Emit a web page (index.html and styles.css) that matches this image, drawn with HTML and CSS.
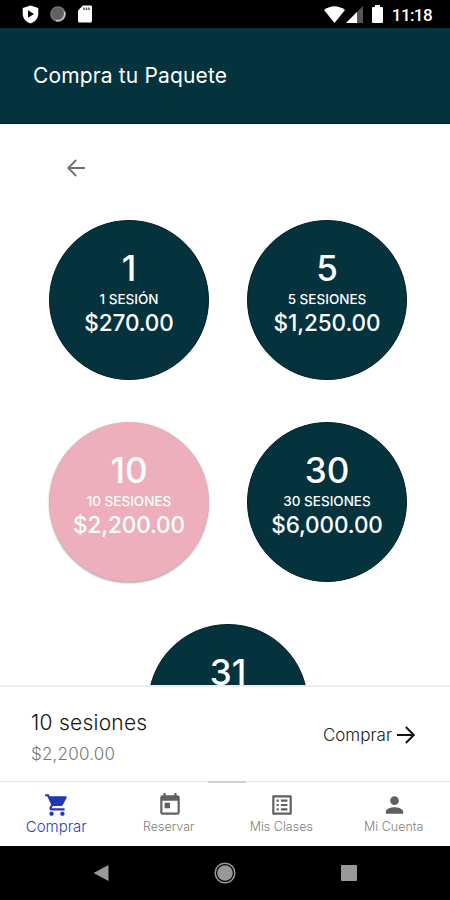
FILE: index.html
```html
<!DOCTYPE html>
<html lang="es">
<head>
    <meta charset="UTF-8">
    <meta name="viewport" content="width=device-width, initial-scale=1.0">
    <title>Compra tu Paquete</title>
    <link rel="stylesheet" href="styles.css">
</head>
<body>
    <div class="status-bar">
        <div class="status-left">
            <svg class="icon-shield" width="17" height="19" viewBox="0 0 17 19"><path d="M8.5 0.5L16.3 3V8.5C16.3 13.5 13 17 8.5 18.5C4 17 0.7 13.5 0.7 8.5V3Z" fill="#fff"/><path d="M6 5.3L12 9L6 12.7Z" fill="#000"/></svg>
            <svg class="icon-sync" width="16" height="16" viewBox="0 0 16 16"><circle cx="8" cy="8" r="7.8" fill="#777"/><circle cx="7.5" cy="7.5" r="6" fill="#606060"/><path d="M14.5 6A7 7 0 0 1 6 14.6" fill="none" stroke="#ccc" stroke-width="1.5"/></svg>
            <svg class="icon-sd" width="14" height="18" viewBox="0 0 14 18"><path d="M5 0.5H12.5Q14 0.5 14 2V16Q14 17.5 12.5 17.5H1.5Q0 17.5 0 16V5.5Z" fill="#fff"/><path d="M6 2.5V5M8.5 2.5V5M11 2.5V5" stroke="#444" stroke-width="1.4"/></svg>
        </div>
        <div class="status-right">
            <svg class="icon-wifi" width="21" height="17" viewBox="0 0 21 17"><path d="M0 4Q10.5 -3.5 21 4L10.5 17Z" fill="#fff"/></svg>
            <svg class="icon-signal" width="17" height="17" viewBox="0 0 17 17"><path d="M0 17L17 0V17Z" fill="#555"/><path d="M0 17L11 6V17Z" fill="#fff"/></svg>
            <svg class="icon-battery" width="11" height="18" viewBox="0 0 11 18"><path d="M3 0H8V2H10Q11 2 11 3V17Q11 18 10 18H1Q0 18 0 17V3Q0 2 1 2H3Z" fill="#fff"/></svg>
            <span class="clock">11:18</span>
        </div>
    </div>
    <header>
        <h1>Compra tu Paquete</h1>
    </header>
    <main>
        <svg class="back" width="18" height="18" viewBox="0 0 18 18"><path d="M18 9H1.5M9.2 1L1.2 9L9.2 17" fill="none" stroke="#707070" stroke-width="1.8"/></svg>
        <div class="paquetes">
            <div class="paquete">
                <span class="numero">1</span>
                <span class="sesiones">1 SESIÓN</span>
                <span class="precio">$270.00</span>
            </div>
            <div class="paquete">
                <span class="numero">5</span>
                <span class="sesiones">5 SESIONES</span>
                <span class="precio">$1,250.00</span>
            </div>
            <div class="paquete seleccionado">
                <span class="numero">10</span>
                <span class="sesiones">10 SESIONES</span>
                <span class="precio">$2,200.00</span>
            </div>
            <div class="paquete">
                <span class="numero">30</span>
                <span class="sesiones">30 SESIONES</span>
                <span class="precio">$6,000.00</span>
            </div>
            <div class="paquete ultimo">
                <span class="numero">31</span>
            </div>
        </div>
    </main>
    <section class="resumen">
        <div class="detalle">
            <p class="resumen-titulo">10 sesiones</p>
            <p class="resumen-precio">$2,200.00</p>
        </div>
        <div class="comprar">
            <span>Comprar</span>
            <svg width="18" height="18" viewBox="0 0 18 18"><path d="M0 9H16.5M8.8 1L16.8 9L8.8 17" fill="none" stroke="#111" stroke-width="1.9"/></svg>
        </div>
    </section>
    <nav class="tabs">
        <div class="tirador"></div>
        <div class="tab activo">
            <svg width="26" height="26" viewBox="0 0 24 24"><path d="M7 18c-1.1 0-1.99.9-1.99 2S5.9 22 7 22s2-.9 2-2-.9-2-2-2zM1 2v2h2l3.6 7.590-1.350 2.450c-.16.28-.25.61-.25.96 0 1.100.9 2 2 2h12v-2H7.420c-.14 0-.25-.11-.25-.25l.03-.12.9-1.630h7.450c.75 0 1.410-.41 1.750-1.030l3.580-6.490A1 1 0 0 0 20 4H5.210l-.94-2H1zm16 16c-1.100 0-1.990.9-1.990 2s.89 2 1.990 2 2-.9 2-2-.9-2-2-2z"/></svg>
            <span>Comprar</span>
        </div>
        <div class="tab">
            <svg width="26" height="26" viewBox="0 0 24 24"><path d="M19 3h-1V1h-2v2H8V1H6v2H5a2 2 0 0 0-2 2v14c0 1.100.9 2 2 2h14c1.100 0 2-.9 2-2V5c0-1.100-.9-2-2-2zm0 16H5V8h14v11zM7 10h5v5H7z"/></svg>
            <span>Reservar</span>
        </div>
        <div class="tab">
            <svg width="26" height="26" viewBox="0 0 24 24"><path d="M19 5v14H5V5h14m1.100-2H3.900c-.5 0-.9.4-.9.9v16.200c0 .4.4.9.9.9h16.200c.4 0 .9-.5.9-.9V3.900c0-.5-.5-.9-.9-.9zM11 7h6v2h-6V7zm0 4h6v2h-6v-2zm0 4h6v2h-6zM7 7h2v2H7zm0 4h2v2H7zm0 4h2v2H7z"/></svg>
            <span>Mis Clases</span>
        </div>
        <div class="tab">
            <svg width="27" height="26" viewBox="0 0 24 24"><path d="M12 12c2.210 0 4-1.790 4-4s-1.790-4-4-4-4 1.790-4 4 1.790 4 4 4zm0 2c-2.670 0-8 1.340-8 4v2h16v-2c0-2.660-5.330-4-8-4z"/></svg>
            <span>Mi Cuenta</span>
        </div>
    </nav>
    <div class="android-nav">
        <svg width="16" height="18" viewBox="0 0 16 18"><path d="M0.5 9L15.5 1V17Z" fill="#999"/></svg>
        <svg width="22" height="22" viewBox="0 0 22 22"><circle cx="11" cy="11" r="9.8" fill="none" stroke="#999" stroke-width="1.5"/><circle cx="11" cy="11" r="7.8" fill="#999"/></svg>
        <svg width="16" height="16" viewBox="0 0 16 16"><rect width="16" height="16" rx="1" fill="#999"/></svg>
    </div>
</body>
</html>
```
FILE: styles.css
```css
* { box-sizing: border-box; }
body { font-family: Inter, 'Liberation Sans', sans-serif; margin: 0; height: 900px; display: flex; flex-direction: column; background: #fff; overflow: hidden; }
svg { display: block; flex: none; }
p { margin: 0; }

.status-bar { height: 28px; flex: none; background: #000; display: flex; justify-content: space-between; padding: 0 18px 0 22px; }
.status-left, .status-right { display: flex; align-items: center; }
.icon-sync { margin-left: 11px; }
.icon-sd { margin-left: 12px; }
.icon-signal { margin-left: 1px; }
.icon-battery { margin-left: 9px; }
.clock { margin-left: 9px; font: 500 17px/28px Roboto, sans-serif; letter-spacing: -0.6px; color: #fff; padding-top: 2px; }

header { height: 96px; flex: none; background: #04333d; border-bottom: 1px solid #021a20; display: flex; align-items: center; padding-left: 33px; }
header h1 { margin: 0; font-size: 21px; font-weight: 400; letter-spacing: 0.15px; color: #fff; }

main { height: 561px; flex: none; overflow: hidden; padding-left: 49px; }
.back { margin: 35px 0 0 18px; }
.paquetes { display: grid; grid-template-columns: 160px 160px; gap: 42px 38px; width: 358px; margin-top: 43px; }
.paquete { width: 160px; height: 160px; border-radius: 50%; background: #04333d; border: 1px solid #021f26; color: #fff; display: flex; flex-direction: column; align-items: center; padding-top: 27px; white-space: nowrap; }
.seleccionado { background: #ecafbb; border-color: #e8adb8; box-shadow: 0 1px 2px rgba(0, 0, 0, 0.35); }
.ultimo { grid-column: 1 / 3; justify-self: center; }
.numero { font-size: 35px; line-height: 41px; font-weight: 500; }
.sesiones { font-size: 13.5px; line-height: 20px; font-weight: 500; }
.precio { font-size: 22.5px; line-height: 27px; font-weight: 500; letter-spacing: -0.1px; }

.resumen { height: 96px; flex: none; border-top: 2px solid #ececec; display: flex; justify-content: space-between; align-items: center; padding: 1px 35px 0 31px; }
.detalle { padding-top: 6px; }
.resumen-titulo { font-size: 21px; line-height: 32px; font-weight: 300; letter-spacing: 0.25px; color: #111; }
.resumen-precio { font-size: 17px; line-height: 30px; font-weight: 300; letter-spacing: 0.2px; color: #777; }
.comprar { display: flex; align-items: center; gap: 5px; font-size: 17px; font-weight: 300; color: #222; }

.tabs { position: relative; height: 65px; flex: none; border-top: 1px solid #e6e6e6; display: grid; grid-template-columns: repeat(4, 1fr); }
.tirador { position: absolute; top: -1px; left: 208px; width: 38px; height: 2px; background: #d0d0d0; }
.tab { display: flex; flex-direction: column; align-items: center; padding-top: 10px; font-size: 12.5px; line-height: 18px; font-weight: 300; color: #808080; white-space: nowrap; }
.tab svg { fill: #606060; margin-left: 2px; }
.activo { font-size: 15px; color: #2c42b8; }
.activo svg { fill: #2238b4; }

.android-nav { height: 54px; flex: none; background: #000; display: flex; align-items: center; justify-content: space-between; padding: 0 93px; }
```
